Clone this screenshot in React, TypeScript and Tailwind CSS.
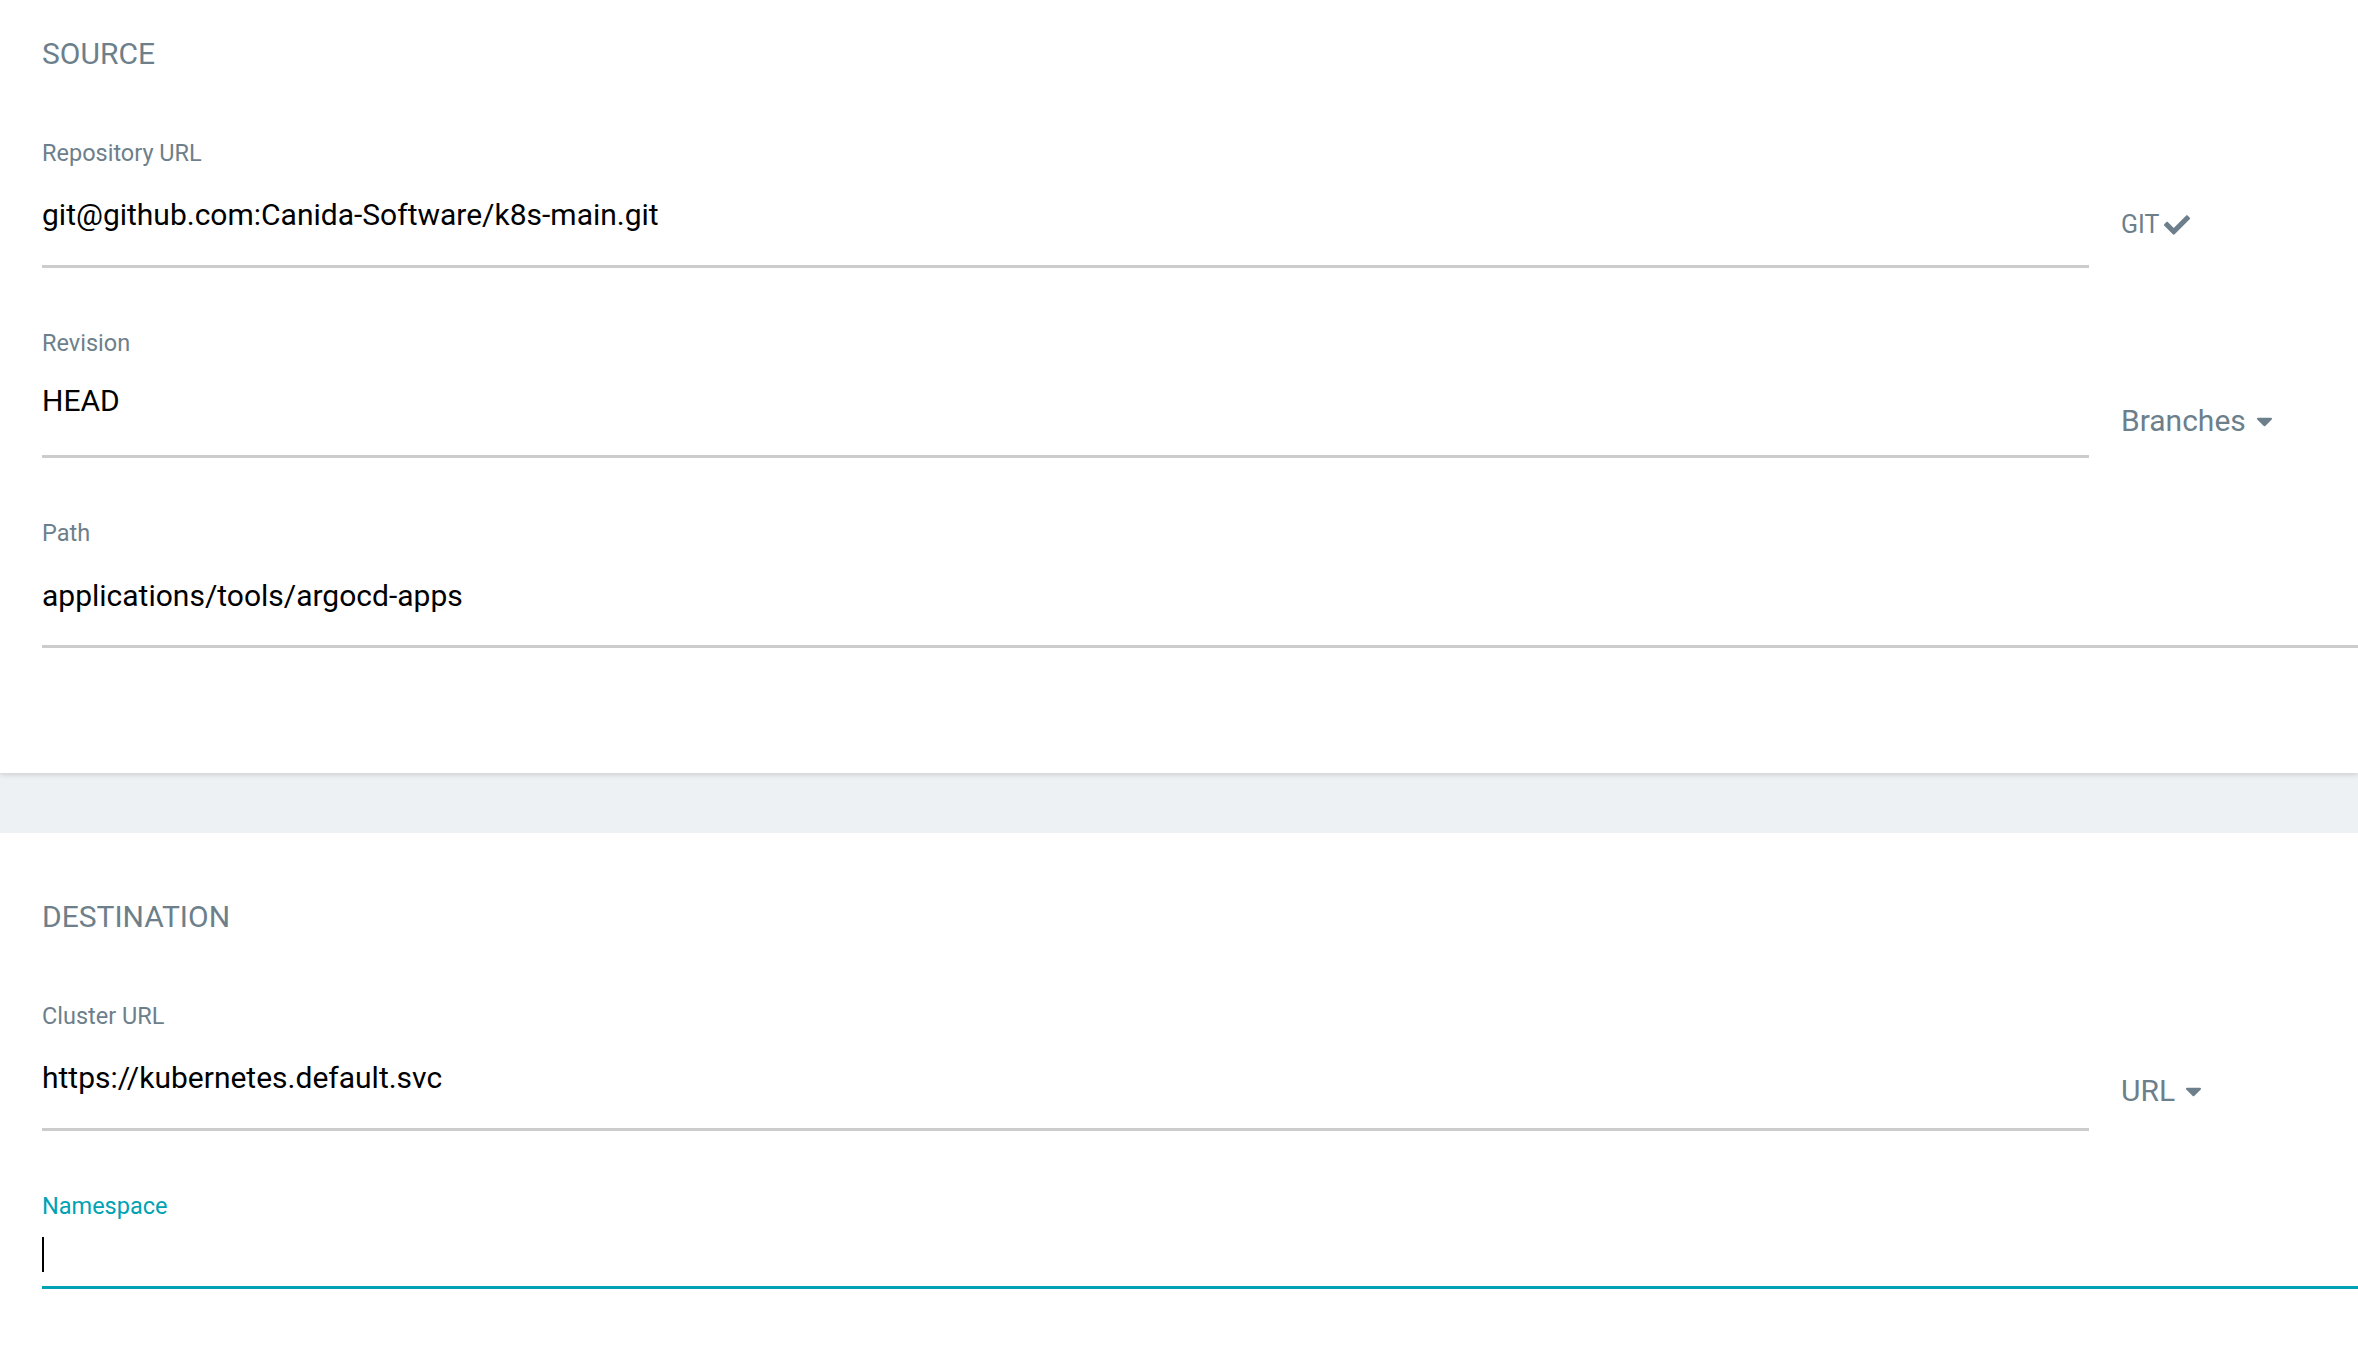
import type { ReactNode } from 'react';

const font = { fontFamily: 'Roboto, "Liberation Sans", sans-serif' };

function CheckIcon() {
  return (
    <svg viewBox="0 0 512 512" className="ml-[5px] h-[26px] w-[26px] fill-[#6d7f8b]" aria-hidden="true">
      <path d="M173.9 439.4l-166.4-166.4c-10-10-10-26.2 0-36.2l36.2-36.2c10-10 26.2-10 36.2 0L192 312.7 432.1 72.6c10-10 26.2-10 36.2 0l36.2 36.2c10 10 10 26.2 0 36.2l-294.4 294.4c-10 10-26.2 10-36.2 0z" />
    </svg>
  );
}

function CaretDown() {
  return (
    <svg viewBox="0 0 320 512" className="ml-[10px] h-[26px] w-[17px] fill-[#6d7f8b]" aria-hidden="true">
      <path d="M31.3 192h257.3c17.8 0 26.7 21.5 14.1 34.1L174.1 354.8c-7.8 7.8-20.5 7.8-28.3 0L17.2 226.1C4.6 213.5 13.5 192 31.3 192z" />
    </svg>
  );
}

function Field({ label, value, offset = 'pb-[4px]' }: { label: string; value: string; offset?: string }) {
  return (
    <div className="flex-1">
      <div className="text-[23.5px] leading-[30px] text-[#6d7f8b]">{label}</div>
      <div className={`flex h-[100px] items-center border-b-[3px] border-[#cccccc] text-[30px] text-black ${offset}`}>
        {value}
      </div>
    </div>
  );
}

function Row({ children, side, pb = 'pb-[28px]' }: { children: ReactNode; side?: ReactNode; pb?: string }) {
  return (
    <div className="flex items-end">
      {children}
      {side && <div className={`w-[269px] shrink-0 pl-[32px] ${pb}`}>{side}</div>}
    </div>
  );
}

function SectionTitle({ children }: { children: ReactNode }) {
  return <h2 className="text-[30px] leading-[36px] text-[#6d7f8b]">{children}</h2>;
}

export default function App() {
  return (
    <div className="min-h-[1366px] bg-white" style={font}>
      <section className="relative z-10 bg-white pb-[125px] pl-[42px] pt-[36px] shadow-[0_2px_5px_rgba(0,0,0,0.13)]">
        <SectionTitle>SOURCE</SectionTitle>
        <div className="mt-[66px]">
          <Row
            pb="pb-[28px]"
            side={
              <div className="flex items-center text-[25px] leading-[30px] text-[#6d7f8b]">
                GIT
                <CheckIcon />
              </div>
            }
          >
            <Field label="Repository URL" value="git@github.com:Canida-Software/k8s-main.git" />
          </Row>
        </div>
        <div className="mt-[60px]">
          <Row
            pb="pb-[22px]"
            side={
              <div className="flex items-center text-[30px] leading-[30px] text-[#6d7f8b]">
                Branches
                <CaretDown />
              </div>
            }
          >
            <Field label="Revision" value="HEAD" offset="pb-[12px]" />
          </Row>
        </div>
        <div className="mt-[60px]">
          <Row>
            <Field label="Path" value="applications/tools/argocd-apps" offset="pb-[2px]" />
          </Row>
        </div>
      </section>

      <div className="h-[60px] bg-[#eef1f4]" />

      <section className="bg-white pl-[42px] pt-[66px]">
        <SectionTitle>DESTINATION</SectionTitle>
        <div className="mt-[66px]">
          <Row
            pb="pb-[25px]"
            side={
              <div className="flex items-center text-[30px] leading-[30px] text-[#6d7f8b]">
                URL
                <CaretDown />
              </div>
            }
          >
            <Field label="Cluster URL" value="https://kubernetes.default.svc" />
          </Row>
        </div>
        <div className="mt-[60px]">
          <div className="text-[23.5px] leading-[30px] text-[#00a2b3]">Namespace</div>
          <div className="flex h-[68px] items-center border-b-[3px] border-[#00a2b3] pt-[2px]">
            <span className="block h-[35px] w-[2px] bg-black" />
          </div>
        </div>
      </section>
    </div>
  );
}
